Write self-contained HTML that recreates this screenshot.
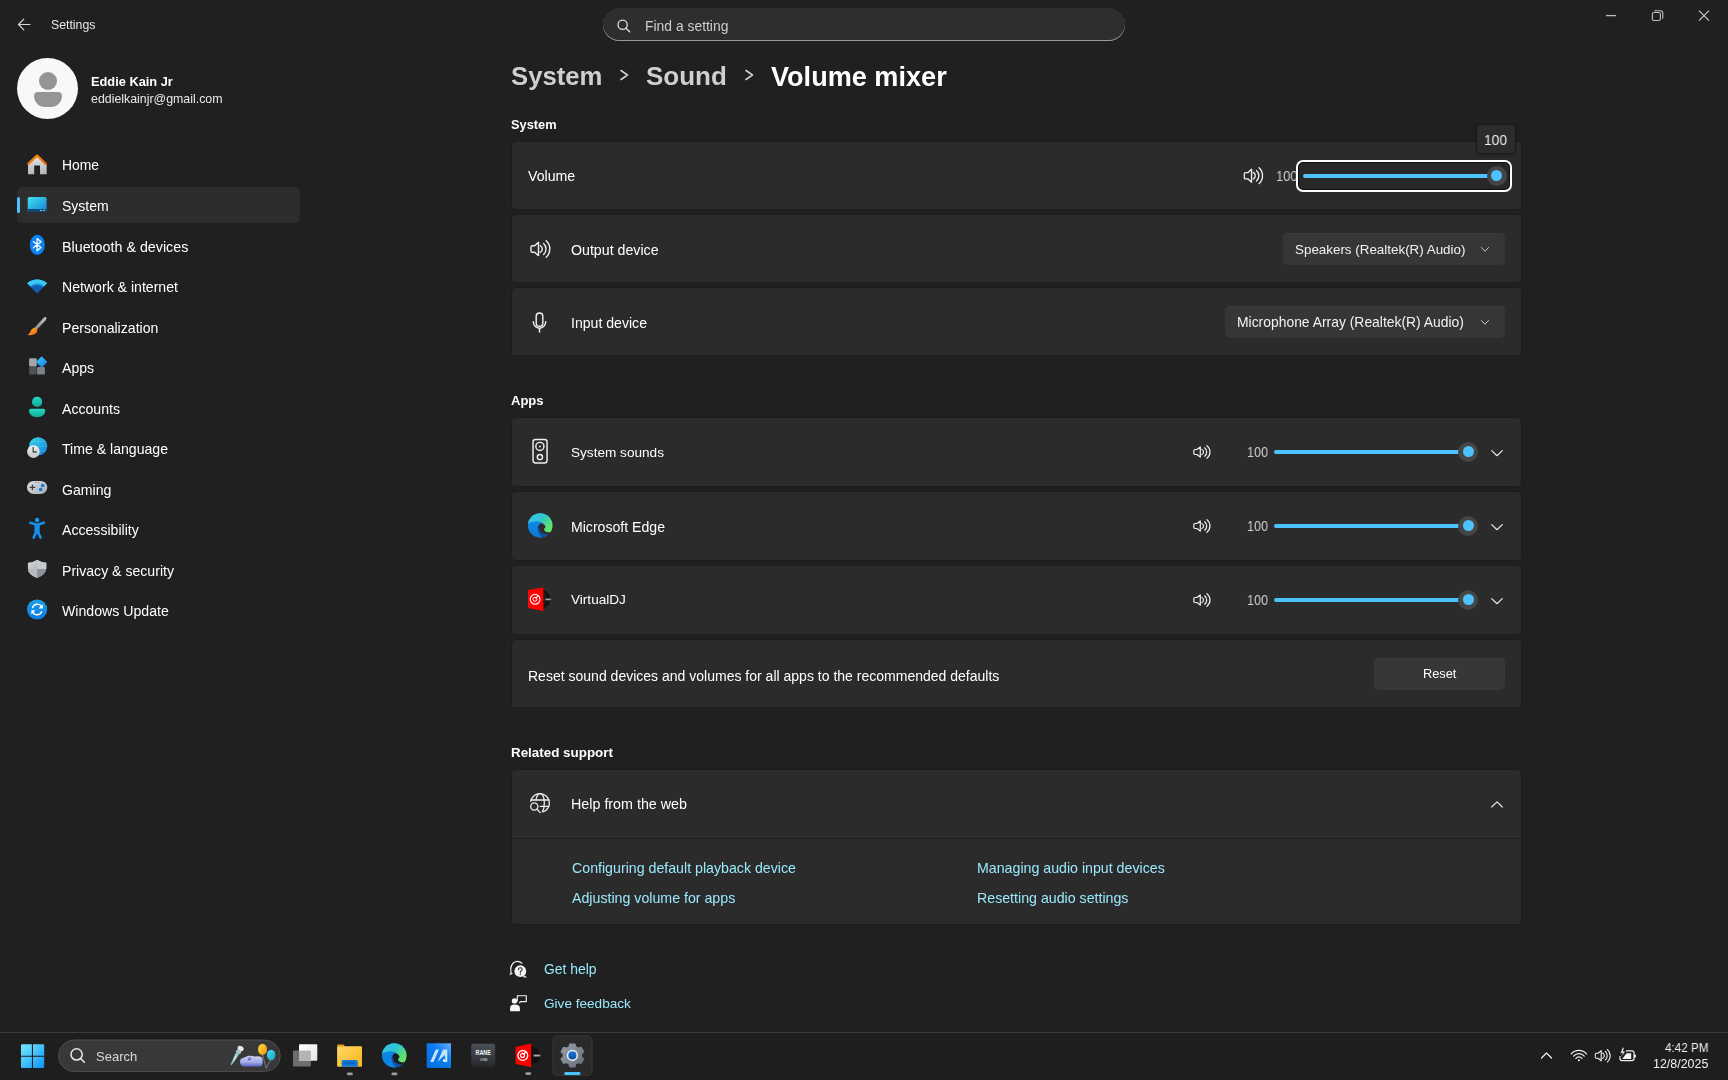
<!DOCTYPE html>
<html><head><meta charset="utf-8">
<style>
*{margin:0;padding:0;box-sizing:border-box}
html,body{width:1728px;height:1080px;overflow:hidden;background:#202020}
body{position:relative;font-family:"Liberation Sans",sans-serif;color:#fff}
.t{position:absolute;line-height:1;white-space:nowrap;will-change:transform}
.a{position:absolute}
.card{position:absolute;left:511.5px;width:1009.5px;background:#2b2b2b;border-radius:3.5px;box-shadow:0 0 0 1px #1c1c1c}
svg{position:absolute;overflow:visible}
.lnk{color:#99e8fc}
</style></head><body>

<!-- Title bar -->
<svg style="left:0;top:0" width="40" height="40" viewBox="0 0 40 40"><path d="M30 24.5H18.5M23.8 19.2L18.5 24.5L23.8 29.8" fill="none" stroke="#d6d6d6" stroke-width="1.2" stroke-linecap="round" stroke-linejoin="round"/></svg>
<div class="t" style="left:50.7px;top:19px;font-size:12.3px;color:#e6e6e6">Settings</div>

<!-- search -->
<div class="a" style="left:602.7px;top:8px;width:522.7px;height:32.7px;border-radius:16px;background:#2e2e2e;box-shadow:inset 0 -1px 0 #9a9a9a"></div>
<svg style="left:0;top:0" width="1" height="1"><g transform="translate(617,19.2)" fill="none" stroke="#e0e0e0" stroke-width="1.3"><circle cx="5.6" cy="5.6" r="4.6"/><path d="M9 9L12.6 12.6" stroke-linecap="round"/></g></svg>
<div class="t" style="left:645px;top:19.5px;font-size:13.9px;color:#cdcdcd">Find a setting</div>

<!-- window controls -->
<svg style="left:0;top:0" width="1" height="1">
<path d="M1606 15.6H1616" stroke="#bdbdbd" stroke-width="1.3"/>
<rect x="1652.4" y="12.5" width="8" height="8" rx="1.6" fill="none" stroke="#bdbdbd" stroke-width="1.1"/>
<path d="M1654.5 11A2 2 0 0 1 1656.5 10.8H1660.5A2.3 2.3 0 0 1 1662.8 13.1V17.2A2 2 0 0 1 1662.4 18.6" fill="none" stroke="#bdbdbd" stroke-width="1.1"/>
<path d="M1699 10.7L1709 20.7M1709 10.7L1699 20.7" stroke="#d0d0d0" stroke-width="1.1"/>
</svg>

<!-- avatar -->
<div class="a" style="left:17.4px;top:58.3px;width:61px;height:61px;border-radius:50%;background:#f8f8f8"></div>
<div class="a" style="left:38.9px;top:71.5px;width:18px;height:18px;border-radius:50%;background:#959595"></div>
<div class="a" style="left:33.8px;top:91.9px;width:28.4px;height:14.8px;border-radius:5px 5px 14px 14px;background:#959595"></div>
<div class="t" style="left:90.6px;top:76.4px;font-size:12.8px;font-weight:700;color:#fff">Eddie Kain Jr</div>
<div class="t" style="left:90.6px;top:93px;font-size:12.38px;color:#e8e8e8">eddielkainjr@gmail.com</div>

<!-- nav selected -->
<div class="a" style="left:17px;top:186.7px;width:282.5px;height:36px;border-radius:5px;background:#2d2d2d"></div>
<div class="a" style="left:17px;top:196.8px;width:3.2px;height:16px;border-radius:2px;background:#4cc2ff"></div>

<svg style="left:0;top:0" width="60" height="640" viewBox="0 0 60 640">
<defs>
<linearGradient id="gHouse" x1="0" y1="0" x2="0" y2="1"><stop offset="0" stop-color="#dfe2e6"/><stop offset="1" stop-color="#b4b6ba"/></linearGradient>
<linearGradient id="gRoof" x1="0" y1="0" x2="1" y2="1"><stop offset="0" stop-color="#ff9a10"/><stop offset="1" stop-color="#e25a0a"/></linearGradient>
<linearGradient id="gSys" x1="0" y1="0" x2="1" y2="1"><stop offset="0" stop-color="#42e2f0"/><stop offset="1" stop-color="#1580d8"/></linearGradient>
<linearGradient id="gWifi1" x1="0" y1="0" x2="0" y2="1"><stop offset="0" stop-color="#3ccdf4"/><stop offset="1" stop-color="#38c0f0"/></linearGradient>
<linearGradient id="gBrush" x1="1" y1="0" x2="0" y2="1"><stop offset="0" stop-color="#c0c6cc"/><stop offset="1" stop-color="#80888f"/></linearGradient>
<linearGradient id="gBristle" x1="0" y1="0" x2="1" y2="1"><stop offset="0" stop-color="#ffc020"/><stop offset="1" stop-color="#f05a18"/></linearGradient>
<linearGradient id="gDia" x1="0" y1="0" x2="1" y2="1"><stop offset="0" stop-color="#40d0f8"/><stop offset="1" stop-color="#0c78e0"/></linearGradient>
<linearGradient id="gAcc" x1="0" y1="0" x2="0" y2="1"><stop offset="0" stop-color="#28d8c4"/><stop offset="1" stop-color="#12a696"/></linearGradient>
<linearGradient id="gGlobe" x1="0" y1="0" x2="1" y2="1"><stop offset="0" stop-color="#38dcec"/><stop offset="1" stop-color="#1478d8"/></linearGradient>
<linearGradient id="gClock" x1="0" y1="0" x2="0" y2="1"><stop offset="0" stop-color="#f0f0f2"/><stop offset="1" stop-color="#c8c8cc"/></linearGradient>
<linearGradient id="gPad" x1="0" y1="0" x2="1" y2="1"><stop offset="0" stop-color="#dde0e6"/><stop offset="1" stop-color="#a8acb4"/></linearGradient>
<linearGradient id="gShield" x1="0" y1="0" x2="1" y2="1"><stop offset="0" stop-color="#d8dce2"/><stop offset="1" stop-color="#8a9098"/></linearGradient>
<linearGradient id="gUpd" x1="0" y1="0" x2="0" y2="1"><stop offset="0" stop-color="#1ea0ec"/><stop offset="1" stop-color="#0a7ade"/></linearGradient>
</defs>
<!-- Home -->
<path d="M28 164.5V174.2H34.2V165.6H40V174.2H46.7V164.5L37.2 156Z" fill="url(#gHouse)"/>
<path d="M28.3 163.8L37.1 155.6L45.9 163.8" fill="none" stroke="url(#gRoof)" stroke-width="2.3" stroke-linecap="round" stroke-linejoin="round"/>
<!-- System -->
<rect x="27.7" y="196.9" width="18.9" height="15" rx="1.6" fill="url(#gSys)"/>
<path d="M27.7 209H46.6V210.3A1.6 1.6 0 0 1 45 211.9H29.3A1.6 1.6 0 0 1 27.7 210.3Z" fill="#0c4a72"/>
<rect x="40" y="209.9" width="1.8" height="1" fill="#8fd0ee"/><rect x="43" y="209.9" width="1.8" height="1" fill="#8fd0ee"/>
<!-- Bluetooth -->
<ellipse cx="37.3" cy="244.9" rx="7.5" ry="10.2" fill="#0b82f4"/>
<path d="M33.3 241.6L41 247.6L37.1 250.8V238.6L41 241.8L33.3 247.8" fill="none" stroke="#fff" stroke-width="1.3" stroke-linejoin="round" stroke-linecap="round"/>
<!-- Wifi -->
<path d="M27.3 283.2A15 15 0 0 1 47 283.2L37.15 293.4Z" fill="#0f5fb0"/>
<path d="M27.3 283.2A15 15 0 0 1 47 283.2L43.2 287.2A9.4 9.4 0 0 0 31.1 287.2Z" fill="#1898e2"/>
<path d="M27.3 283.2A15 15 0 0 1 47 283.2L44.3 286A11 11 0 0 0 30 286Z" fill="#3ccaf2"/>
<!-- Personalization -->
<path d="M34.5 327.8L44 317.6Q45.6 316.3 46.4 317.6Q46.8 318.6 45.6 320.3L37 329.6Z" fill="url(#gBrush)"/>
<path d="M34.6 327.7Q36.8 327.2 37.3 329.4Q37.6 333.5 32.8 334.8Q29.8 335.5 27.4 334.8Q29.5 333.9 30.3 332Q31.2 328.6 34.6 327.7Z" fill="url(#gBristle)"/>
<!-- Apps -->
<rect x="29.1" y="358.3" width="7.6" height="8.3" rx="1" fill="#a2a6ae"/>
<rect x="29.1" y="367" width="7.6" height="7.6" rx="1" fill="#4c5258"/>
<rect x="37.1" y="367" width="7.8" height="7.6" rx="1" fill="#7c8288"/>
<path d="M41.7 356.8L46.9 362L41.7 367.2L36.5 362Z" fill="url(#gDia)" stroke="url(#gDia)" stroke-width="1" stroke-linejoin="round"/>
<!-- Accounts -->
<circle cx="37.1" cy="401.9" r="5.1" fill="url(#gAcc)"/>
<path d="M29 410.6Q29 408.8 30.8 408.8H43.4Q45.2 408.8 45.2 410.6Q45.2 417.2 37.1 417.2Q29 417.2 29 410.6Z" fill="url(#gAcc)"/>
<!-- Time & language -->
<circle cx="38.2" cy="446.3" r="9.1" fill="url(#gGlobe)"/>
<path d="M29.5 446.3H47M38.2 437.3V455.4M31 441.5H45.4M31 451H45.4" stroke="#5ee0f4" stroke-width="0.6" opacity="0.5"/>
<circle cx="33.4" cy="451.6" r="6.3" fill="url(#gClock)"/>
<path d="M33.2 447.5V452H36.3" fill="none" stroke="#4a4a4a" stroke-width="1.3" stroke-linecap="round" stroke-linejoin="round"/>
<!-- Gaming -->
<rect x="27" y="480.9" width="20.3" height="13.1" rx="6.55" fill="url(#gPad)"/>
<path d="M32.4 485V489.6M30.1 487.3H34.7" stroke="#3c3c3c" stroke-width="1.2" stroke-linecap="round"/>
<circle cx="42.7" cy="485.4" r="1.75" fill="#0a78e0"/><circle cx="40.6" cy="489.5" r="1.75" fill="#0a78e0"/>
<circle cx="35.5" cy="482.5" r="0.5" fill="#5a5a5a"/><circle cx="38.5" cy="482.5" r="0.5" fill="#5a5a5a"/>
<!-- Accessibility -->
<circle cx="37.1" cy="520" r="2.2" fill="#1898ec"/>
<path d="M30.3 522.8L37.1 524.8L43.9 522.8M37.1 524.9V531.6M36 532.6L33.6 537.6M38.2 532.6L40.6 537.6" fill="none" stroke="#168ee8" stroke-width="2.6" stroke-linecap="round" stroke-linejoin="round"/>
<path d="M34.4 524.6H39.8L39.6 533.8H34.6Z" fill="#168ee8"/>
<!-- Privacy -->
<path d="M37.1 559.8Q32.8 562.7 27.9 562.7V567.5Q27.9 574.6 37.1 578Q46.3 574.6 46.3 567.5V562.7Q41.4 562.7 37.1 559.8Z" fill="url(#gShield)"/>
<path d="M37.1 559.8V569H46.3V567.5V562.7Q41.4 562.7 37.1 559.8Z" fill="#c6cad0"/>
<path d="M37.1 569V578Q46.3 574.6 46.3 567.5V569Z" fill="#8c9299"/>
<path d="M27.9 569H37.1V578Q27.9 574.6 27.9 569Z" fill="#b6bac0"/>
<!-- Windows Update -->
<circle cx="37.1" cy="609.5" r="10.1" fill="url(#gUpd)"/>
<path d="M32.6 607.5A5 5 0 0 1 41.6 606.6M41.6 611.7A5 5 0 0 1 32.6 612.2" fill="none" stroke="#fff" stroke-width="1.4" stroke-linecap="round"/>
<path d="M42.8 604.3V608.6H38.6Z" fill="#fff"/><path d="M31.3 614.6V610.3H35.5Z" fill="#fff"/>
</svg>


<div class="t" style="left:61.7px;top:158.5px;font-size:13.9px">Home</div>
<div class="t" style="left:61.7px;top:199px;font-size:14px">System</div>
<div class="t" style="left:61.7px;top:239.5px;font-size:14.3px">Bluetooth &amp; devices</div>
<div class="t" style="left:61.7px;top:280px;font-size:14.1px">Network &amp; internet</div>
<div class="t" style="left:61.7px;top:320.5px;font-size:14.1px">Personalization</div>
<div class="t" style="left:61.7px;top:361px;font-size:14.1px">Apps</div>
<div class="t" style="left:61.7px;top:401.5px;font-size:14.1px">Accounts</div>
<div class="t" style="left:61.7px;top:442px;font-size:14.1px">Time &amp; language</div>
<div class="t" style="left:61.7px;top:482.5px;font-size:14.1px">Gaming</div>
<div class="t" style="left:61.7px;top:523px;font-size:14.1px">Accessibility</div>
<div class="t" style="left:61.7px;top:563.5px;font-size:14.1px">Privacy &amp; security</div>
<div class="t" style="left:61.7px;top:604px;font-size:14.15px">Windows Update</div>

<!-- breadcrumb -->
<div class="t" style="left:510.6px;top:63.6px;font-size:25.7px;font-weight:700;color:#cfcfcf">System</div>
<div class="t" style="left:645.6px;top:63.4px;font-size:26px;font-weight:700;color:#cfcfcf">Sound</div>
<div class="t" style="left:771px;top:62.5px;font-size:27.1px;font-weight:700;color:#fff">Volume mixer</div>
<svg style="left:0;top:0" width="1" height="1"><path d="M621 70.5L627.5 75L621 79.5M746 70.5L752.5 75L746 79.5" fill="none" stroke="#cfcfcf" stroke-width="1.6" stroke-linecap="round" stroke-linejoin="round"/></svg>

<!-- section headers -->
<div class="t" style="left:510.6px;top:118.6px;font-size:12.8px;font-weight:700">System</div>
<div class="t" style="left:510.6px;top:393.9px;font-size:13px;font-weight:700">Apps</div>
<div class="t" style="left:510.6px;top:745.7px;font-size:13.4px;font-weight:700">Related support</div>

<!-- cards -->
<div class="card" style="top:141.7px;height:67px"></div>
<div class="card" style="top:215.4px;height:67px"></div>
<div class="card" style="top:288.4px;height:67px"></div>
<div class="card" style="top:418px;height:68px"></div>
<div class="card" style="top:492px;height:67.5px"></div>
<div class="card" style="top:566px;height:67.5px"></div>
<div class="card" style="top:640.2px;height:66.5px"></div>
<div class="card" style="top:770px;height:154.3px"></div>
<div class="a" style="left:511.5px;top:837.6px;width:1009.5px;height:1px;background:#1d1d1d"></div>

<svg width="0" height="0" style="position:absolute">
<defs>
<symbol id="spk" viewBox="0 0 21 18"><g fill="none" stroke="#f0f0f0" stroke-width="1.4" stroke-linejoin="round" stroke-linecap="round"><path d="M4.6 5.8L8.5 2.4V15.6L4.6 12.2H2.3Q1 12.2 1 10.9V7.1Q1 5.8 2.3 5.8Z"/><path d="M10.23 5.61A3.8 3.8 0 0 1 10.23 12.39"/><path d="M13.61 3.51A7.5 7.5 0 0 1 13.61 14.49"/><path d="M16.21 0.74A11.3 11.3 0 0 1 16.21 17.26"/></g></symbol>
<symbol id="chev" viewBox="0 0 12 7"><path d="M0.7 0.7L6 6L11.3 0.7" fill="none" stroke="#e8e8e8" stroke-width="1.2" stroke-linecap="round" stroke-linejoin="round"/></symbol>
</defs></svg>

<!-- Volume card -->
<div class="t" style="left:527.8px;top:169.4px;font-size:14.15px">Volume</div>
<svg style="left:1243px;top:166.8px" width="21" height="17.5" viewBox="0 0 21 18"><use href="#spk"/></svg>
<div class="t" style="left:1275.5px;top:168.9px;font-size:14.3px;color:#cfcfcf;transform:scaleX(0.9);transform-origin:0 0">100</div>
<div class="a" style="left:1295.6px;top:159.6px;width:216.5px;height:32px;border-radius:7px;border:2px solid #fff;background:#282828;box-shadow:inset 0 0 0 1px #0e0e0e"></div>
<div class="a" style="left:1302.9px;top:173.6px;width:194px;height:4px;border-radius:2px;background:#4cc2ff"></div>
<div class="a" style="left:1486.5px;top:165.6px;width:20px;height:20px;border-radius:50%;background:#454545"></div>
<div class="a" style="left:1491px;top:170.1px;width:11px;height:11px;border-radius:50%;background:#4cc2ff"></div>
<div class="a" style="left:1477px;top:125px;width:38px;height:28px;border-radius:4px;background:#2c2c2c;box-shadow:0 0 0 1px #1a1a1a,0 2px 4px rgba(0,0,0,.35)"></div>
<div class="t" style="left:1484px;top:132.2px;font-size:15px;color:#f2f2f2;transform:scaleX(0.92);transform-origin:0 0">100</div>

<!-- Output device -->
<svg style="left:529.7px;top:240px" width="21" height="18" viewBox="0 0 21 18"><use href="#spk"/></svg>
<div class="t" style="left:570.6px;top:243.3px;font-size:14.2px">Output device</div>
<div class="a" style="left:1283px;top:233px;width:222px;height:32px;border-radius:5px;background:#363636;box-shadow:inset 0 1px 0 #3c3c3c"></div>
<div class="t" style="left:1294.7px;top:243px;font-size:13.4px;color:#f2f2f2">Speakers (Realtek(R) Audio)</div>
<svg style="left:1481px;top:246.7px" width="8" height="5" viewBox="0 0 12 7" preserveAspectRatio="none"><use href="#chev"/></svg>

<!-- Input device -->
<svg style="left:531px;top:311.5px" width="17" height="21" viewBox="0 0 17 21"><g fill="none" stroke="#f0f0f0" stroke-width="1.45" stroke-linecap="round"><rect x="5.2" y="0.9" width="6.6" height="13.4" rx="3.3"/><path d="M2.3 9.8A6.2 6.4 0 0 0 14.7 9.8"/><path d="M8.5 16.4V20"/></g></svg>
<div class="t" style="left:570.6px;top:316px;font-size:14.1px">Input device</div>
<div class="a" style="left:1225px;top:306.2px;width:280px;height:31.6px;border-radius:5px;background:#363636;box-shadow:inset 0 1px 0 #3c3c3c"></div>
<div class="t" style="left:1237.3px;top:316.2px;font-size:13.9px;color:#f2f2f2">Microphone Array (Realtek(R) Audio)</div>
<svg style="left:1481px;top:319.8px" width="8" height="5" viewBox="0 0 12 7" preserveAspectRatio="none"><use href="#chev"/></svg>

<!-- System sounds -->
<svg style="left:531px;top:437.9px" width="17" height="26" viewBox="0 0 17 26"><g fill="none" stroke="#f0f0f0" stroke-width="1.45"><rect x="2.05" y="1.45" width="14" height="23.5" rx="2.4"/><circle cx="8.9" cy="8.4" r="4.05"/><circle cx="8.9" cy="19.1" r="2.6"/></g><circle cx="8.9" cy="8.4" r="0.95" fill="#f0f0f0"/></svg>
<div class="t" style="left:570.6px;top:445.7px;font-size:13.6px">System sounds</div>

<svg style="left:527.8px;top:513.3px" width="25" height="25" viewBox="0 0 25 25">
<defs>
<linearGradient id="gEdgeTop" x1="0" y1="0" x2="1" y2="0.6"><stop offset="0" stop-color="#3ec4f8"/><stop offset="0.55" stop-color="#2cc6cc"/><stop offset="1" stop-color="#6ae55a"/></linearGradient>
<linearGradient id="gEdgeL" x1="0" y1="0" x2="0" y2="1"><stop offset="0" stop-color="#1190e8"/><stop offset="1" stop-color="#0a78d8"/></linearGradient>
<clipPath id="cEdge"><circle cx="12.2" cy="12.4" r="12.25"/></clipPath>
</defs>
<g clip-path="url(#cEdge)">
<rect x="0" y="0" width="25" height="25" fill="url(#gEdgeL)"/>
<path d="M9.5 13.5Q9.5 22 15.5 25.5L26 25.5V20.5Q22 22.5 18 21.5Q12 20 11 12.5Z" fill="#0e52a4"/>
<path d="M10.6 13.8Q10.6 10.3 14 10.3Q17.8 10.3 17.8 14Q16.2 15 16.2 16.6Q16.4 19 20.5 19.3L26 19.6V21.2Q22 22.2 18 21.4Q10.6 19.8 10.6 13.8Z" fill="#2b2b2b"/>
<path d="M-1 11Q3.5 8 8.5 8.2Q15.5 8.6 17.8 14Q16.2 15 16.2 16.6Q16.4 19 20.5 19.3Q24.5 19.5 26 16V-1H-1Z" fill="url(#gEdgeTop)"/>
</g>
</svg>
<svg style="left:524px;top:583px" width="32" height="32" viewBox="0 0 32 32">
<defs><radialGradient id="gVinyl" cx="0.2" cy="0.5" r="0.8"><stop offset="0" stop-color="#202020"/><stop offset="1" stop-color="#0c0c0c"/></radialGradient>
<linearGradient id="gVbar" x1="0" y1="0" x2="1" y2="0"><stop offset="0" stop-color="#909090"/><stop offset="0.5" stop-color="#c8c8c8"/><stop offset="1" stop-color="#707070"/></linearGradient></defs>
<path d="M19 6.8Q26 9 26 16.3Q26 23.6 19 25.8Z" fill="url(#gVinyl)"/>
<rect x="21.3" y="15.6" width="6" height="1.6" fill="url(#gVbar)" opacity="0.9"/>
<path d="M4 7.1L19.3 4.4V27.9L4 25Z" fill="#ff0000"/>
<circle cx="11.1" cy="16.3" r="4.9" fill="none" stroke="#fff" stroke-width="1.2" opacity="0.95"/>
<circle cx="10.9" cy="16.3" r="2" fill="none" stroke="#fff" stroke-width="1" opacity="0.9"/>
<path d="M11.5 15.5L14.3 12.6" stroke="#fff" stroke-width="1.1"/>
</svg>

<!-- Edge -->
<div class="t" style="left:570.8px;top:520px;font-size:14.1px">Microsoft Edge</div>
<!-- VirtualDJ -->
<div class="t" style="left:570.8px;top:593.3px;font-size:13.6px">VirtualDJ</div>

<svg style="left:1192.6px;top:445.3px" width="18" height="14" viewBox="0 0 21 18" preserveAspectRatio="none"><use href="#spk"/></svg>
<div class="t" style="left:1246.9px;top:445.1px;font-size:14.3px;color:#cfcfcf;transform:scaleX(0.88);transform-origin:0 0">100</div>
<div class="a" style="left:1274.2px;top:449.9px;width:194px;height:4px;border-radius:2px;background:#4cc2ff"></div>
<div class="a" style="left:1458px;top:441.9px;width:20px;height:20px;border-radius:50%;background:#454545"></div>
<div class="a" style="left:1462.5px;top:446.4px;width:11px;height:11px;border-radius:50%;background:#4cc2ff"></div>
<svg style="left:1491.3px;top:449.5px" width="12" height="6.7" viewBox="0 0 12 7" preserveAspectRatio="none"><use href="#chev"/></svg>
<svg style="left:1192.6px;top:519.3px" width="18" height="14" viewBox="0 0 21 18" preserveAspectRatio="none"><use href="#spk"/></svg>
<div class="t" style="left:1246.9px;top:519.1px;font-size:14.3px;color:#cfcfcf;transform:scaleX(0.88);transform-origin:0 0">100</div>
<div class="a" style="left:1274.2px;top:523.9px;width:194px;height:4px;border-radius:2px;background:#4cc2ff"></div>
<div class="a" style="left:1458px;top:515.9px;width:20px;height:20px;border-radius:50%;background:#454545"></div>
<div class="a" style="left:1462.5px;top:520.4px;width:11px;height:11px;border-radius:50%;background:#4cc2ff"></div>
<svg style="left:1491.3px;top:523.5px" width="12" height="6.7" viewBox="0 0 12 7" preserveAspectRatio="none"><use href="#chev"/></svg>
<svg style="left:1192.6px;top:593.3px" width="18" height="14" viewBox="0 0 21 18" preserveAspectRatio="none"><use href="#spk"/></svg>
<div class="t" style="left:1246.9px;top:593.1px;font-size:14.3px;color:#cfcfcf;transform:scaleX(0.88);transform-origin:0 0">100</div>
<div class="a" style="left:1274.2px;top:597.9px;width:194px;height:4px;border-radius:2px;background:#4cc2ff"></div>
<div class="a" style="left:1458px;top:589.9px;width:20px;height:20px;border-radius:50%;background:#454545"></div>
<div class="a" style="left:1462.5px;top:594.4px;width:11px;height:11px;border-radius:50%;background:#4cc2ff"></div>
<svg style="left:1491.3px;top:597.5px" width="12" height="6.7" viewBox="0 0 12 7" preserveAspectRatio="none"><use href="#chev"/></svg>
<!-- Reset -->
<div class="t" style="left:528.2px;top:668.7px;font-size:14.03px">Reset sound devices and volumes for all apps to the recommended defaults</div>
<div class="a" style="left:1374px;top:657.5px;width:131px;height:32px;border-radius:5px;background:#373737;box-shadow:inset 0 1px 0 #3d3d3d"></div>
<div class="t" style="left:1422.7px;top:668.1px;font-size:12.8px">Reset</div>

<!-- Help from web -->
<svg style="left:0;top:0" width="1" height="1"><g fill="none" stroke="#f0f0f0" stroke-width="1.3" stroke-linecap="round">
<path d="M530.75 801.3A9.4 9.4 0 1 1 543 811.9"/>
<path d="M531.1 800H548.9M540.4 806.4H548.7"/>
<path d="M535.9 800.2A4.3 9.4 0 0 1 544.3 803A4.3 9.4 0 0 1 542.4 811.6"/>
<circle cx="534.3" cy="806.5" r="3.6"/>
<path d="M537 809.3L540.3 812.6"/>
</g></svg>
<div class="t" style="left:570.9px;top:797.4px;font-size:14.3px">Help from the web</div>
<svg style="left:1491.3px;top:800.5px" width="12" height="6.7" viewBox="0 0 12 7" preserveAspectRatio="none"><g transform="rotate(180 6 3.5)"><use href="#chev"/></g></svg>
<div class="t lnk" style="left:571.8px;top:861.3px;font-size:14.2px">Configuring default playback device</div>
<div class="t lnk" style="left:571.8px;top:891.2px;font-size:14.2px">Adjusting volume for apps</div>
<div class="t lnk" style="left:977px;top:861.3px;font-size:14.2px">Managing audio input devices</div>
<div class="t lnk" style="left:977px;top:891.2px;font-size:14.2px">Resetting audio settings</div>

<!-- Get help / feedback -->
<svg style="left:0;top:0" width="1" height="1">
<path d="M511 972.5Q510 966 513.5 962.8Q517.5 959.8 522 963.2" fill="none" stroke="#f2f2f2" stroke-width="1.2" stroke-linecap="round"/>
<path d="M511 972.5L509.8 974.8L512.6 973.4" fill="#f2f2f2" stroke="#f2f2f2" stroke-width="0.6"/>
<circle cx="520.3" cy="971.2" r="5.9" fill="#f4f4f4"/>
<path d="M524 975.3L527.3 977.6L523 977.3Z" fill="#f4f4f4"/>
<path d="M518.4 969.6Q518.6 967.8 520.3 967.8Q522.1 967.8 522.1 969.5Q522.1 970.6 520.9 971.1Q520.3 971.5 520.3 972.4" fill="none" stroke="#2a2a2a" stroke-width="1.1" stroke-linecap="round"/>
<circle cx="520.3" cy="974.2" r="0.7" fill="#2a2a2a"/>
<circle cx="514.5" cy="1000.9" r="2.7" fill="#f4f4f4"/>
<path d="M510.1 1011.2V1008.2Q510.1 1004.6 514.5 1004.6Q519.9 1004.6 519.9 1008.2V1011.2Z" fill="#f4f4f4"/>
<path d="M517.3 1001.4V995.7H526.3V1001.6H520.6L519.2 1003.2" fill="none" stroke="#f2f2f2" stroke-width="1.15" stroke-linejoin="round"/>
</svg>

<div class="t lnk" style="left:544.4px;top:963.4px;font-size:13.9px">Get help</div>
<div class="t lnk" style="left:544.4px;top:997.3px;font-size:13.6px">Give feedback</div>


<!-- taskbar -->
<div class="a" style="left:0;top:1032px;width:1728px;height:48px;background:#1e1e1e;border-top:1px solid #3b3b3b"></div>
<svg style="left:0;top:1032px" width="1728" height="48" viewBox="0 1032 1728 48">
<defs>
<linearGradient id="gWin" gradientUnits="userSpaceOnUse" x1="21" y1="1044" x2="44" y2="1068"><stop offset="0" stop-color="#78ecff"/><stop offset="1" stop-color="#0c94f6"/></linearGradient>
<linearGradient id="gTV1" x1="0" y1="0" x2="1" y2="1"><stop offset="0" stop-color="#ffffff"/><stop offset="1" stop-color="#e4e4e4"/></linearGradient>
<linearGradient id="gFold" x1="0" y1="0" x2="1" y2="1"><stop offset="0" stop-color="#ffd868"/><stop offset="1" stop-color="#f8b418"/></linearGradient>
<linearGradient id="gA" x1="0" y1="1" x2="1" y2="0"><stop offset="0" stop-color="#006ee0"/><stop offset="0.6" stop-color="#0c7ef0"/><stop offset="1" stop-color="#68b0fc"/></linearGradient>
<linearGradient id="gRane" x1="0" y1="0" x2="0" y2="1"><stop offset="0" stop-color="#4c5058"/><stop offset="1" stop-color="#24262a"/></linearGradient>
<linearGradient id="gGear" x1="0" y1="0" x2="1" y2="1"><stop offset="0" stop-color="#98a0a8"/><stop offset="1" stop-color="#66707a"/></linearGradient>
<linearGradient id="gGearC" x1="0" y1="0" x2="0" y2="1"><stop offset="0" stop-color="#1a78d8"/><stop offset="1" stop-color="#0a50a8"/></linearGradient>
<linearGradient id="gEdgeTop2" x1="0" y1="0" x2="1" y2="0.6"><stop offset="0" stop-color="#3ec4f8"/><stop offset="0.55" stop-color="#2cc6cc"/><stop offset="1" stop-color="#6ae55a"/></linearGradient>
<clipPath id="cEdge2"><circle cx="12.2" cy="12.4" r="12.25"/></clipPath>
</defs>
<!-- windows logo -->
<g fill="url(#gWin)">
<path d="M21 1045.3A1 1 0 0 1 22 1044.3H31.9V1055.7H21Z"/>
<path d="M33 1044.3H43.2A1 1 0 0 1 44.2 1045.3V1055.7H33Z"/>
<path d="M21 1056.8H31.9V1067.9H22A1 1 0 0 1 21 1066.9Z"/>
<path d="M33 1056.8H44.2V1066.9A1 1 0 0 1 43.2 1067.9H33Z"/>
</g>
<!-- search pill -->
<rect x="58.5" y="1040" width="221.8" height="31.6" rx="15.8" fill="#383838" stroke="#4e4e4e" stroke-width="1"/>
<circle cx="76.6" cy="1054.4" r="5.6" fill="none" stroke="#e6e6e6" stroke-width="1.5"/>
<path d="M80.6 1058.5L84.3 1062.3" stroke="#e6e6e6" stroke-width="1.6" stroke-linecap="round"/>
<!-- decoration -->
<defs><linearGradient id="gShoe" x1="0" y1="0" x2="0" y2="1"><stop offset="0" stop-color="#c8ccf4"/><stop offset="0.6" stop-color="#a4aae8"/><stop offset="1" stop-color="#5860c0"/></linearGradient>
<linearGradient id="gBal1" x1="0" y1="0" x2="1" y2="1"><stop offset="0" stop-color="#ffd838"/><stop offset="1" stop-color="#f09818"/></linearGradient>
<linearGradient id="gBal2" x1="0" y1="0" x2="1" y2="1"><stop offset="0" stop-color="#48e4f8"/><stop offset="1" stop-color="#18a0c0"/></linearGradient>
<linearGradient id="gMic" x1="0" y1="0" x2="1" y2="0"><stop offset="0" stop-color="#5a9ca4"/><stop offset="0.5" stop-color="#c8e0e4"/><stop offset="1" stop-color="#6aa0a8"/></linearGradient></defs>
<path d="M230.4 1064.6L236.2 1052.2L239.6 1053.8L231.6 1065.2Z" fill="url(#gMic)"/>
<path d="M235.6 1052L237.4 1049.2L241.8 1051.4L240 1054.2Z" fill="#a8c8cc"/>
<ellipse cx="240.6" cy="1048.4" rx="3.2" ry="2.3" transform="rotate(28 240.6 1048.4)" fill="#e4ecee"/>
<path d="M240 1061.5Q240.2 1058.5 243.5 1057.8L248.5 1055.8Q252 1055.5 255 1056.6Q259.5 1055.8 261.8 1057.5Q262.8 1059 262.6 1062.5Q262.8 1066.6 259 1066.6H245Q240 1066.5 240 1061.5Z" fill="url(#gShoe)"/>
<path d="M248.5 1058.3L250.5 1057.5M248 1060L251 1059" stroke="#3a40a0" stroke-width="0.9"/>
<path d="M254 1057.4Q258 1057 261 1058" stroke="#e8d8b0" stroke-width="0.7" fill="none"/>
<path d="M262.6 1055L266.2 1068.4L270.5 1060" fill="none" stroke="#8a8a9a" stroke-width="0.8"/>
<ellipse cx="262.5" cy="1049.4" rx="4.5" ry="5.6" fill="url(#gBal1)"/>
<ellipse cx="271.2" cy="1055" rx="4.2" ry="5.2" fill="url(#gBal2)"/>
<!-- task view -->
<rect x="293" y="1050.6" width="17.8" height="15.8" rx="1" fill="#6e6e6e"/>
<rect x="299" y="1044.2" width="18.3" height="16.6" rx="1" fill="url(#gTV1)"/>
<rect x="299" y="1050.6" width="11.8" height="10.2" fill="#b4b4b4"/>
<!-- file explorer -->
<path d="M337.1 1045.6A1 1 0 0 1 338.1 1044.6H343.5L345.2 1046.5H337.1Z" fill="#e8a000"/>
<rect x="337.1" y="1046.3" width="24.9" height="20.5" rx="1" fill="url(#gFold)"/>
<path d="M341.6 1062Q341.6 1060 343.6 1060H355.8Q357.8 1060 357.8 1062V1066.8H341.6Z" fill="#1278d6"/>
<path d="M344.5 1063H355" stroke="#0a4c98" stroke-width="0.9"/>
<rect x="346.8" y="1072.5" width="6.1" height="2.8" rx="1.4" fill="#9a9a9a"/>
<!-- edge -->
<g transform="translate(382,1043) scale(1)">
<g clip-path="url(#cEdge2)">
<rect x="0" y="0" width="25" height="25" fill="#0c84e4"/>
<path d="M9.5 13.5Q9.5 22 15.5 25.5L26 25.5V20.5Q22 22.5 18 21.5Q12 20 11 12.5Z" fill="#0e52a4"/>
<path d="M10.6 13.8Q10.6 10.3 14 10.3Q17.8 10.3 17.8 14Q16.2 15 16.2 16.6Q16.4 19 20.5 19.3L26 19.6V21.2Q22 22.2 18 21.4Q10.6 19.8 10.6 13.8Z" fill="#1c1c1c"/>
<path d="M-1 11Q3.5 8 8.5 8.2Q15.5 8.6 17.8 14Q16.2 15 16.2 16.6Q16.4 19 20.5 19.3Q24.5 19.5 26 16V-1H-1Z" fill="url(#gEdgeTop2)"/>
</g></g>
<rect x="391.4" y="1072.5" width="6.1" height="2.8" rx="1.4" fill="#9a9a9a"/>
<!-- A app -->
<rect x="426.7" y="1043.3" width="24.3" height="24.6" fill="url(#gA)"/>
<path d="M430.2 1061.9L435.7 1049.5H439L433.5 1061.9Z M437.5 1061.9L443 1049.5H447.3V1061.9H444.3L445.4 1059L444.6 1055Z" fill="#d8ecff" opacity="0.9"/>
<circle cx="444.1" cy="1060.5" r="1.2" fill="#fff"/>
<!-- RANE ONE -->
<rect x="471.2" y="1043.8" width="24" height="23.8" rx="2.5" fill="url(#gRane)"/>
<text x="483.2" y="1054.8" font-family="Liberation Sans" font-size="6.6" font-weight="700" fill="#f4f4f4" text-anchor="middle" textLength="15.5" lengthAdjust="spacingAndGlyphs">RANE</text>
<text x="483.8" y="1060.6" font-family="Liberation Sans" font-size="3.6" font-weight="700" fill="#b8b8b8" text-anchor="middle" textLength="7.4" lengthAdjust="spacingAndGlyphs">ONE</text>
<!-- VirtualDJ -->
<path d="M531 1046.2Q540.3 1048.5 540.3 1055.5Q540.3 1062.5 531 1064.8Z" fill="#111"/>
<rect x="533.5" y="1054.6" width="6.8" height="1.9" fill="#a8a8a8"/>
<path d="M515.6 1047L531.2 1043.6V1067.3L515.6 1064Z" fill="#ff0000"/>
<circle cx="522.8" cy="1055.4" r="4.9" fill="none" stroke="#fff" stroke-width="1.3"/>
<circle cx="522.6" cy="1055.4" r="2" fill="none" stroke="#fff" stroke-width="1.1"/>
<path d="M523.2 1054.6L526 1051.6" stroke="#fff" stroke-width="1.2"/>
<rect x="525.3" y="1072.2" width="5.9" height="2.7" rx="1.35" fill="#9a9a9a"/>
<!-- settings active -->
<rect x="553" y="1036" width="39" height="39.6" rx="4.5" fill="#2a2a2a" stroke="#383838" stroke-width="1"/>
<g transform="translate(572.4,1055.4)">
<path id="gearP" fill="url(#gGear)" d="M-2.6 -11.4L2.6 -11.4L3.3 -8.6L6.0 -7.1L8.7 -8.1L11.3 -3.6L9.2 -1.5V1.5L11.3 3.6L8.7 8.1L6.0 7.1L3.3 8.6L2.6 11.4H-2.6L-3.3 8.6L-6.0 7.1L-8.7 8.1L-11.3 3.6L-9.2 1.5V-1.5L-11.3 -3.6L-8.7 -8.1L-6.0 -7.1L-3.3 -8.6Z" stroke="url(#gGear)" stroke-width="1.2" stroke-linejoin="round"/>
<circle r="5.6" fill="#f4f4f4"/>
<circle r="4.1" fill="url(#gGearC)"/>
</g>
<rect x="564.2" y="1071.9" width="16.4" height="3.1" rx="1.55" fill="#4cc2ff"/>
<!-- tray -->
<path d="M1541.5 1058L1546.5 1053L1551.5 1058" fill="none" stroke="#f0f0f0" stroke-width="1.2" stroke-linecap="round" stroke-linejoin="round"/>
<g fill="none" stroke="#f0f0f0" stroke-width="1.25" stroke-linecap="round">
<path d="M1571.3 1053.8A10.2 10.2 0 0 1 1586.5 1053.8"/>
<path d="M1573.6 1056.2A6.9 6.9 0 0 1 1584.2 1056.2"/>
<path d="M1575.9 1058.5A3.6 3.6 0 0 1 1581.9 1058.5"/>
</g>
<circle cx="1578.9" cy="1060.3" r="1" fill="#f0f0f0"/>
<g transform="translate(1594.4,1048.7) scale(0.8,0.78)"><use href="#spk" width="21" height="18"/></g>
<path d="M1626 1050.8H1632A2 2 0 0 1 1634 1052.8V1058.6A2 2 0 0 1 1632 1060.6H1622A2 2 0 0 1 1620 1058.6V1056" fill="none" stroke="#f0f0f0" stroke-width="1.2"/>
<path d="M1634 1054.4H1634.8A1.2 1.2 0 0 1 1636 1055.6V1056.4A1.2 1.2 0 0 1 1634.8 1057.6H1634Z" fill="#f0f0f0"/>
<path d="M1626.5 1053.2H1631.2V1058.9H1622.3Q1624.6 1055.6 1626.5 1053.2Z" fill="#f4f4f4"/>
<path d="M1622.6 1047.4L1620.2 1053.2H1622.5L1620.9 1057.6L1625.6 1051.3H1623.2L1624.3 1047.4Z" fill="#f0f0f0" stroke="#1c1c1c" stroke-width="0.6" stroke-linejoin="round"/>
</svg>
<div class="t" style="left:95.8px;top:1050px;font-size:13px;color:#d8d8d8">Search</div>
<div class="t" style="left:1664.7px;top:1042.3px;font-size:12.7px;color:#f0f0f0;transform:scaleX(0.92);transform-origin:0 0">4:42 PM</div>
<div class="t" style="left:1652.8px;top:1057.9px;font-size:12.45px;color:#f0f0f0">12/8/2025</div>


</body></html>
